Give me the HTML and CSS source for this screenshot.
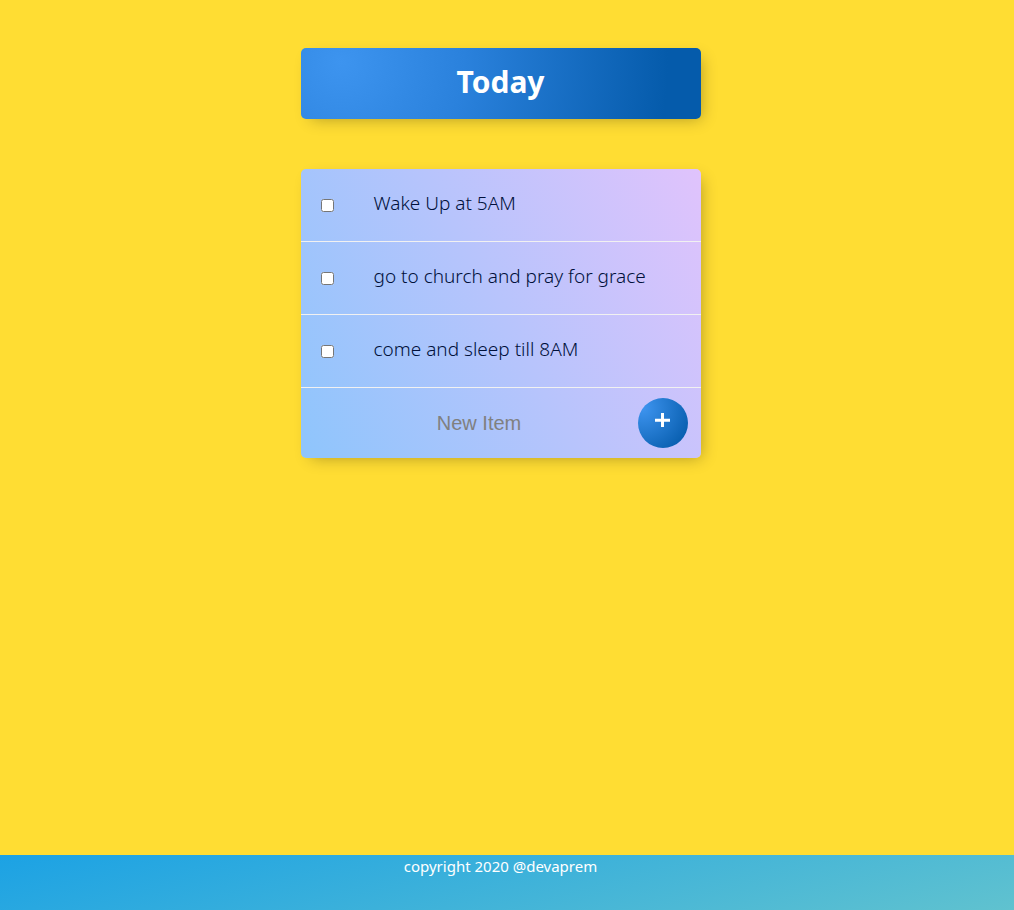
FILE: index.html
```html
<!DOCTYPE html>
<html lang="en">
<head>
<meta charset="utf-8">
<title>To Do List</title>
<link rel="stylesheet" href="styles.css">
</head>
<body>
<main>
<header class="box heading"><h1>Today</h1></header>
<section class="box list">
<div class="item"><input type="checkbox" id="item-1"><label for="item-1">Wake Up at 5AM</label></div>
<div class="item"><input type="checkbox" id="item-2"><label for="item-2">go to church and pray for grace</label></div>
<div class="item"><input type="checkbox" id="item-3"><label for="item-3">come and sleep till 8AM</label></div>
<form class="new-item">
<input type="text" placeholder="New Item" aria-label="New Item" autocomplete="off">
<button type="button" aria-label="Add item"><svg viewBox="0 0 16 16" aria-hidden="true"><path d="M7.5 0v14M0 7.3h15"/></svg></button>
</form>
</section>
</main>
<footer>copyright 2020 @devaprem</footer>
</body>
</html>
```
FILE: styles.css
```css
* { box-sizing: border-box; }
body {
  display: flex;
  flex-direction: column;
  min-height: 100vh;
  margin: 0;
  background: #ffdd33;
  font-family: "Noto Sans", "Open Sans", sans-serif;
}
main {
  flex: 1;
  width: 100%;
  padding: 48px 13px 48px 0;
}
.box {
  max-width: 400px;
  margin: 0 auto 50px;
  border-radius: 5px;
  box-shadow: 5px 5px 15px -5px rgba(0, 0, 0, 0.3);
}
.heading {
  padding: 10px 12px 14px;
  background: radial-gradient(circle 327px at 10% 20%, #3d94ef 0%, #2a81dc 38%, #055bab 100%);
  color: #fff;
  text-align: center;
}
h1 {
  margin: 0;
  font-size: 30px;
  line-height: 47px;
}
.list {
  background: linear-gradient(62deg, #8ec5fc 0%, #e0c3fc 100%);
}
.item {
  display: flex;
  align-items: center;
  height: 73px;
  padding: 0 20px;
  border-bottom: 1px solid #f1f1f1;
}
.item input {
  width: 13px;
  height: 13px;
  margin: 0;
}
.item label {
  margin-left: 40px;
  padding-bottom: 4px;
  color: #00103a;
  font-size: 19px;
  font-weight: 300;
}
.new-item {
  display: flex;
  align-items: center;
  height: 70px;
  padding: 0 13px 0 20px;
}
.new-item input {
  flex: 1;
  min-width: 0;
  height: 60px;
  padding: 0;
  border: 0;
  outline: 0;
  background: transparent;
  font: 20px "Liberation Sans", Arial, sans-serif;
  text-align: center;
}
.new-item input::placeholder { color: #808080; }
.new-item button {
  display: flex;
  align-items: center;
  justify-content: center;
  width: 50px;
  height: 50px;
  padding: 0 0 4px;
  border: 0;
  border-radius: 50%;
  background: radial-gradient(circle at 10% 20%, #3d94ef 0%, #055bab 90%);
}
.new-item svg {
  width: 16px;
  fill: none;
  stroke: #fff;
  stroke-width: 3;
}
footer {
  height: 55px;
  padding: 0 13px 0 0;
  background: linear-gradient(165deg, #1ca2e4, #60c2cf);
  color: #fff;
  font-size: 15px;
  line-height: 22px;
  text-align: center;
}
```
